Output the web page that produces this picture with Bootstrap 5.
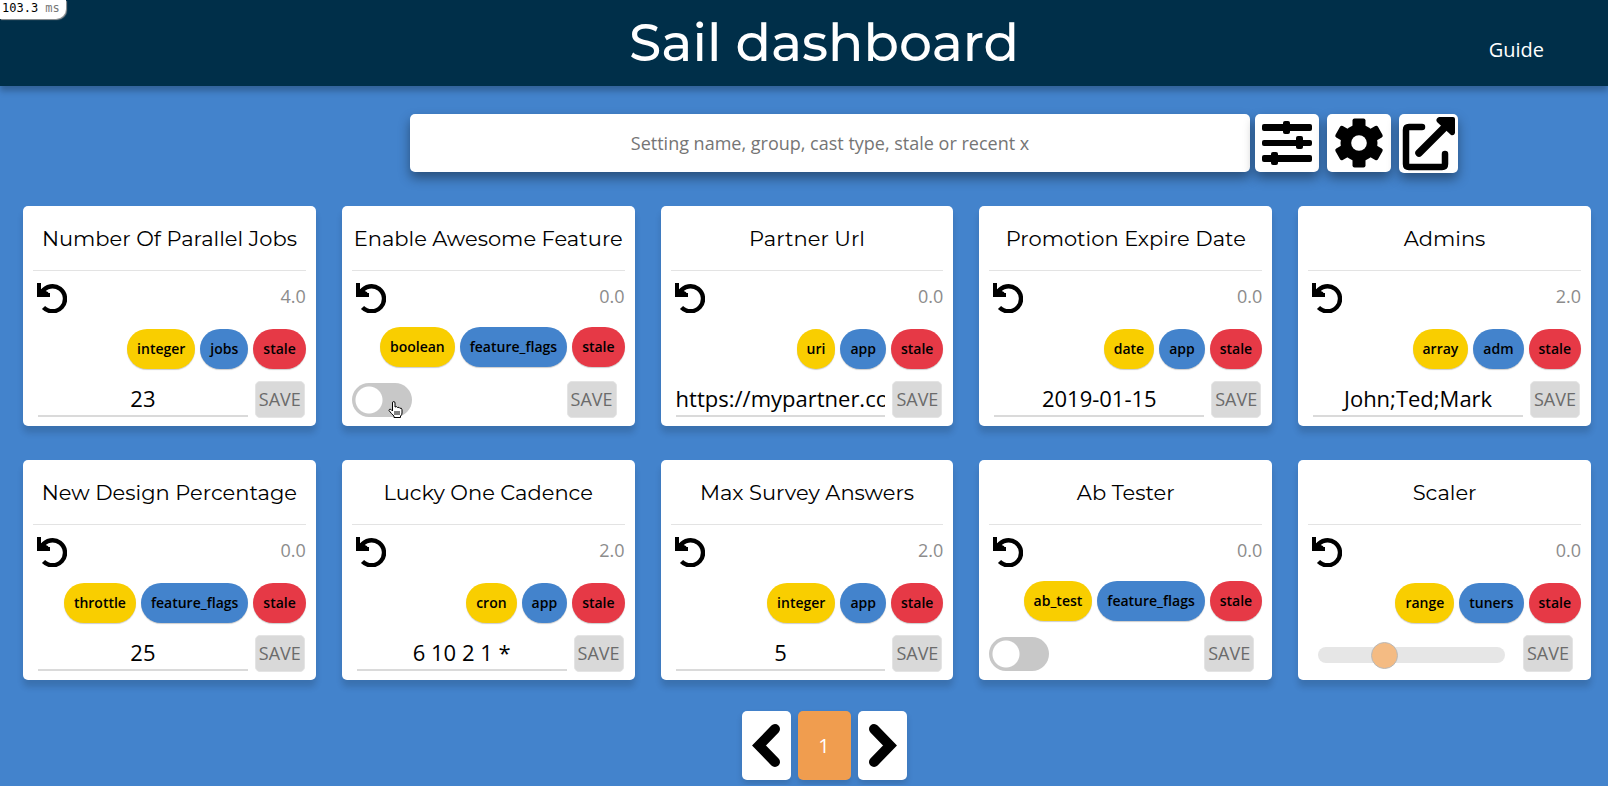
<!DOCTYPE html>
<html lang="en">
<head>
<meta charset="utf-8">
<meta name="viewport" content="width=device-width, initial-scale=1">
<title>Sail dashboard</title>
<link href="https://cdn.jsdelivr.net/npm/bootstrap@5.3.0/dist/css/bootstrap.min.css" rel="stylesheet">
<style>
  body { background: #4383cc; font-family: "Open Sans", sans-serif; color: #000; }
  .site-header { height: 86px; padding-left: 40px; background: #002f49; box-shadow: 0 5px 6px rgba(0,0,0,.25); }
  .site-title { font: 500 52px/86px Montserrat, Inter, sans-serif; }
  .guide-link { font-size: 20px; right: 64px; top: 35px; }
  .timer { left: 0; top: 0; width: 66px; height: 19px; padding-left: 2px; background: #fff; border-radius: 0 0 10px 0; box-shadow: 1px 1px 1px #999; font: 12px/17px "DejaVu Sans Mono", monospace; z-index: 5; }
  .timer span { color: #777; }
  .search-bar { margin: 28px 150px 0 25.5%; gap: 8px; }
  .search-box { height: 58px; margin-right: -3px; border: 0; border-radius: 5px; font-size: 18px; }
  .search-box::placeholder { color: #757575; }
  .raised { box-shadow: 0 6px 12px rgba(0,0,0,.4); }
  .tool-btn { width: 64px; height: 58px; border-radius: 5px; background: #fff; }
  .tool-btn.narrow { width: 59px; height: 59px; }
  .settings { display: grid; grid-template-columns: repeat(5, minmax(0, 1fr)); gap: 34px 26px; padding: 33px 17px 0 23px; }
  .setting { height: 220px; border-radius: 5px; background: #fff; padding: 0 10px; box-shadow: 0 7px 6px rgba(0,0,0,.14); }
  .setting h2 { height: 65px; margin: 0; border-bottom: 1px solid #e3e3e3; font: 400 21px/65px Montserrat, Inter, sans-serif; color: #000; white-space: nowrap; }
  .meta { height: 58px; padding-top: 12px; }
  .undo { width: 30px; height: 30px; margin-left: 4px; }
  .score { font-size: 18px; line-height: 27px; color: #8c8c8c; }
  .tags { gap: 5px; }
  .tag { height: 40px; padding: 0 10px; border-radius: 20px; font-size: 14px; line-height: 40px; font-weight: 600; box-shadow: 0 1px 1px rgba(0,0,0,.2); }
  .kind { background: #f9ce00; }
  .group { background: #4383cc; }
  .stale { background: #e63946; }
  .controls { height: 37px; margin-top: 12px; }
  .value-box { min-width: 0; height: 36px; margin: 0 7px 0 5px; border: 0; border-bottom: 2px solid #dadada; padding: 0; font-size: 22px; line-height: 32px; }
  .save { flex: none; width: 50px; height: 37px; margin-right: 1px; padding: 0; border: 1px solid #e4e4e4; border-radius: 5px; background: #d9d9d9; color: #6b6b6b; font-size: 18px; line-height: 35px; }
  .compact .meta { height: 56px; }
  .compact .controls { margin-top: 14px; }
  .inset .save { margin-right: 8px; }
  .toggle.form-check-input { width: 60px; height: 34px; margin: 0; border: 0; background: #c8c8c8 radial-gradient(circle at 17px 17px, #fff 13px, transparent 14px) no-repeat; }
  .slider { appearance: none; width: 187px; height: 16px; margin: 3px 0 0 10px; border-radius: 8px; background: #e6e6e6; }
  .slider::-webkit-slider-thumb { appearance: none; width: 27px; height: 27px; border: 1px solid #b9b9b9; border-radius: 50%; background: #f4bb83; }
  .hand { left: 36px; top: 18px; }
  .pages { gap: 7px; margin-top: 31px; padding: 0 0 5px 40px; }
  .page-btn { width: 49px; height: 69px; padding: 0; border: 0; border-radius: 5px; background: #fff; box-shadow: 0 4px 6px rgba(0,0,0,.14); }
  .page-btn.current { width: 53px; background: #f09d4f; color: #fff; font-size: 20px; }
</style>
</head>
<body>
<svg class="d-none" xmlns="http://www.w3.org/2000/svg">
  <symbol id="undo" viewBox="0 0 30 30"><path d="M2 0v12h11" fill="none" stroke="#000" stroke-width="4"/><path d="M0 0h4v6l7 3 2 5H0z"/><path d="M5 9A12.500 12.500 0 1 1 6.500 24.500" fill="none" stroke="#000" stroke-width="4.400"/></symbol>
</svg>

<div class="timer position-absolute">103.3 <span>ms</span></div>
<header class="site-header position-relative text-center text-white">
  <h1 class="site-title m-0">Sail dashboard</h1>
  <a class="guide-link position-absolute text-white text-decoration-none" href="#guide">Guide</a>
</header>

<main>
  <form class="search-bar d-flex align-items-start">
    <input class="search-box raised form-control flex-fill text-center" type="text" aria-label="Search settings" placeholder="Setting name, group, cast type, stale or recent x">
    <button class="tool-btn raised border-0 p-0 flex-shrink-0" type="button" aria-label="Filters">
      <svg class="d-block" width="64" height="58"><g><rect x="7" y="10" width="50" height="7" rx="2"/><rect x="7" y="26" width="50" height="6" rx="2"/><rect x="7" y="41" width="50" height="7" rx="2"/><rect x="28" y="7" width="7" height="13" rx="2"/><rect x="41" y="22" width="7" height="13" rx="2"/><rect x="16" y="38" width="7" height="13" rx="2"/></g></svg>
    </button>
    <button class="tool-btn raised border-0 p-0 flex-shrink-0" type="button" aria-label="Preferences">
      <svg class="d-block" width="64" height="58" viewBox="-32 -29 64 58"><g><rect x="-6.500" y="-24.500" width="13" height="49" rx="2"/><rect x="-6.500" y="-24.500" width="13" height="49" rx="2" transform="rotate(60)"/><rect x="-6.500" y="-24.500" width="13" height="49" rx="2" transform="rotate(120)"/></g><circle r="18.500"/><circle r="7.800" fill="#fff"/></svg>
    </button>
    <button class="tool-btn narrow raised border-0 p-0 flex-shrink-0" type="button" aria-label="Open in new window">
      <svg class="d-block" width="59" height="59"><path d="M23 13H10q-3 0-3 3v34q0 3 3 3h33q3 0 3-3V40" fill="none" stroke="#000" stroke-width="6.500" stroke-linecap="round" stroke-linejoin="round"/><path d="M20 39L46 13" stroke="#000" stroke-width="7.500" stroke-linecap="round"/><path d="M40 3h14q2 0 2 2v14q-1 3-4 2L38 8q-2-3 2-5z"/></svg>
    </button>
  </form>

  <section class="settings">
    <article class="setting">
      <h2 class="text-center">Number Of Parallel Jobs</h2>
      <div class="meta d-flex justify-content-between align-items-start"><button class="undo btn p-0 border-0 d-flex" type="button" aria-label="Reset"><svg width="30" height="30"><use href="#undo"/></svg></button><span class="score">4.0</span></div>
      <div class="tags d-flex justify-content-end"><span class="tag kind">integer</span><span class="tag group">jobs</span><span class="tag stale">stale</span></div>
      <form class="controls d-flex"><input class="value-box flex-fill text-center" type="text" aria-label="Number Of Parallel Jobs" value="23"><button class="save" type="button">SAVE</button></form>
    </article>
    <article class="setting compact inset">
      <h2 class="text-center">Enable Awesome Feature</h2>
      <div class="meta d-flex justify-content-between align-items-start"><button class="undo btn p-0 border-0 d-flex" type="button" aria-label="Reset"><svg width="30" height="30"><use href="#undo"/></svg></button><span class="score">0.0</span></div>
      <div class="tags d-flex justify-content-end"><span class="tag kind">boolean</span><span class="tag group">feature_flags</span><span class="tag stale">stale</span></div>
      <form class="controls d-flex align-items-center justify-content-between">
        <div class="form-switch p-0 position-relative d-flex"><input class="toggle form-check-input" type="checkbox" role="switch" aria-label="Enable Awesome Feature">
          <svg class="hand position-absolute pe-none" viewBox="0 0 15 17" width="15" height="17"><path d="M4.500 10V2q0-1.500 1.200-1.500T7 2v4q2-1 2.500.5 1.800-.8 2.300.7 2.200-.5 2.200 1.600V12q0 2-1.500 3v1.500H6V15Q3.500 13 1 9.500q0-1.700 1.800-1.200z" fill="#fff" stroke="#000"/><path d="M7 10v4M9 10v4M11 10v4" stroke="#000"/></svg>
        </div><button class="save" type="button">SAVE</button></form>
    </article>
    <article class="setting">
      <h2 class="text-center">Partner Url</h2>
      <div class="meta d-flex justify-content-between align-items-start"><button class="undo btn p-0 border-0 d-flex" type="button" aria-label="Reset"><svg width="30" height="30"><use href="#undo"/></svg></button><span class="score">0.0</span></div>
      <div class="tags d-flex justify-content-end"><span class="tag kind">uri</span><span class="tag group">app</span><span class="tag stale">stale</span></div>
      <form class="controls d-flex"><input class="value-box flex-fill text-center" type="text" aria-label="Partner Url" value="https://mypartner.com"><button class="save" type="button">SAVE</button></form>
    </article>
    <article class="setting">
      <h2 class="text-center">Promotion Expire Date</h2>
      <div class="meta d-flex justify-content-between align-items-start"><button class="undo btn p-0 border-0 d-flex" type="button" aria-label="Reset"><svg width="30" height="30"><use href="#undo"/></svg></button><span class="score">0.0</span></div>
      <div class="tags d-flex justify-content-end"><span class="tag kind">date</span><span class="tag group">app</span><span class="tag stale">stale</span></div>
      <form class="controls d-flex"><input class="value-box flex-fill text-center" type="text" aria-label="Promotion Expire Date" value="2019-01-15"><button class="save" type="button">SAVE</button></form>
    </article>
    <article class="setting">
      <h2 class="text-center">Admins</h2>
      <div class="meta d-flex justify-content-between align-items-start"><button class="undo btn p-0 border-0 d-flex" type="button" aria-label="Reset"><svg width="30" height="30"><use href="#undo"/></svg></button><span class="score">2.0</span></div>
      <div class="tags d-flex justify-content-end"><span class="tag kind">array</span><span class="tag group">adm</span><span class="tag stale">stale</span></div>
      <form class="controls d-flex"><input class="value-box flex-fill text-center" type="text" aria-label="Admins" value="John;Ted;Mark"><button class="save" type="button">SAVE</button></form>
    </article>
    <article class="setting">
      <h2 class="text-center">New Design Percentage</h2>
      <div class="meta d-flex justify-content-between align-items-start"><button class="undo btn p-0 border-0 d-flex" type="button" aria-label="Reset"><svg width="30" height="30"><use href="#undo"/></svg></button><span class="score">0.0</span></div>
      <div class="tags d-flex justify-content-end"><span class="tag kind">throttle</span><span class="tag group">feature_flags</span><span class="tag stale">stale</span></div>
      <form class="controls d-flex"><input class="value-box flex-fill text-center" type="text" aria-label="New Design Percentage" value="25"><button class="save" type="button">SAVE</button></form>
    </article>
    <article class="setting">
      <h2 class="text-center">Lucky One Cadence</h2>
      <div class="meta d-flex justify-content-between align-items-start"><button class="undo btn p-0 border-0 d-flex" type="button" aria-label="Reset"><svg width="30" height="30"><use href="#undo"/></svg></button><span class="score">2.0</span></div>
      <div class="tags d-flex justify-content-end"><span class="tag kind">cron</span><span class="tag group">app</span><span class="tag stale">stale</span></div>
      <form class="controls d-flex"><input class="value-box flex-fill text-center" type="text" aria-label="Lucky One Cadence" value="6 10 2 1 *"><button class="save" type="button">SAVE</button></form>
    </article>
    <article class="setting">
      <h2 class="text-center">Max Survey Answers</h2>
      <div class="meta d-flex justify-content-between align-items-start"><button class="undo btn p-0 border-0 d-flex" type="button" aria-label="Reset"><svg width="30" height="30"><use href="#undo"/></svg></button><span class="score">2.0</span></div>
      <div class="tags d-flex justify-content-end"><span class="tag kind">integer</span><span class="tag group">app</span><span class="tag stale">stale</span></div>
      <form class="controls d-flex"><input class="value-box flex-fill text-center" type="text" aria-label="Max Survey Answers" value="5"><button class="save" type="button">SAVE</button></form>
    </article>
    <article class="setting compact inset">
      <h2 class="text-center">Ab Tester</h2>
      <div class="meta d-flex justify-content-between align-items-start"><button class="undo btn p-0 border-0 d-flex" type="button" aria-label="Reset"><svg width="30" height="30"><use href="#undo"/></svg></button><span class="score">0.0</span></div>
      <div class="tags d-flex justify-content-end"><span class="tag kind">ab_test</span><span class="tag group">feature_flags</span><span class="tag stale">stale</span></div>
      <form class="controls d-flex align-items-center justify-content-between"><div class="form-switch p-0 d-flex"><input class="toggle form-check-input" type="checkbox" role="switch" aria-label="Ab Tester"></div><button class="save" type="button">SAVE</button></form>
    </article>
    <article class="setting inset">
      <h2 class="text-center">Scaler</h2>
      <div class="meta d-flex justify-content-between align-items-start"><button class="undo btn p-0 border-0 d-flex" type="button" aria-label="Reset"><svg width="30" height="30"><use href="#undo"/></svg></button><span class="score">0.0</span></div>
      <div class="tags d-flex justify-content-end"><span class="tag kind">range</span><span class="tag group">tuners</span><span class="tag stale">stale</span></div>
      <form class="controls d-flex align-items-center justify-content-between"><input class="slider" type="range" aria-label="Scaler" min="0" max="100" value="33"><button class="save" type="button">SAVE</button></form>
    </article>
  </section>

  <nav class="pages d-flex justify-content-center" aria-label="Pages">
    <button class="page-btn" type="button" aria-label="Previous"><svg class="d-block" width="49" height="69"><path d="M33 18L17 34.500 33 51" fill="none" stroke="#000" stroke-width="10" stroke-linecap="round"/></svg></button>
    <button class="page-btn current" type="button" aria-current="page">1</button>
    <button class="page-btn" type="button" aria-label="Next"><svg class="d-block" width="49" height="69"><path d="M16 18L32 34.500 16 51" fill="none" stroke="#000" stroke-width="10" stroke-linecap="round"/></svg></button>
  </nav>
</main>
<script src="https://cdn.jsdelivr.net/npm/bootstrap@5.3.0/dist/js/bootstrap.bundle.min.js"></script>
</body>
</html>
